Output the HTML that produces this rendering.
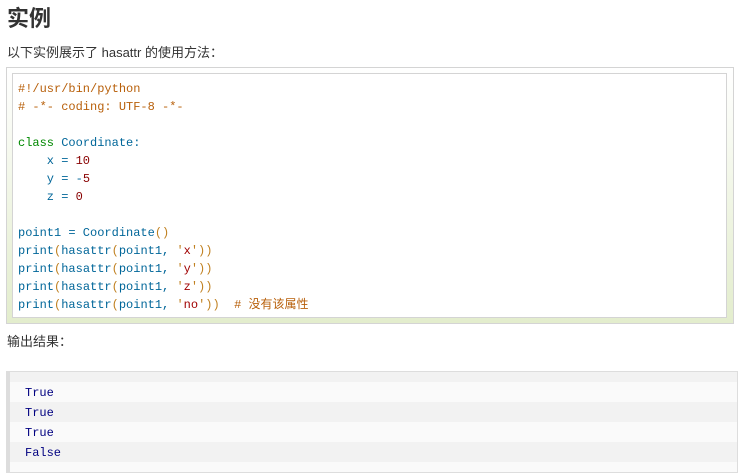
<!DOCTYPE html>
<html><head><meta charset="utf-8"><style>
body{margin:0;background:#fff;width:741px;height:476px;overflow:hidden;font-family:"Liberation Sans","Noto Sans CJK SC",sans-serif;color:#333}
h2{position:absolute;left:7px;top:5px;margin:0;font-size:22px;line-height:28px;font-weight:bold;color:#333}
.p{position:absolute;left:7px;font-size:13px;line-height:18px}
.outer{position:absolute;left:6px;top:67px;width:726px;height:255px;border:1px solid #d4d4d4;background:linear-gradient(#fff,#e3edcd)}
.inner{position:absolute;left:5px;top:5px;width:713px;height:243px;border:1px solid #d4d4d4;background:#fff}
pre{margin:0;position:absolute;left:5px;top:6px;font-family:"Liberation Mono","Noto Sans CJK SC",monospace;font-size:12px;line-height:18px;color:#006699}
.c{color:#b8600b}.k{color:#008800}.n{color:#880000}.o{color:#c08020}.s{color:#a00000}
.out{position:absolute;left:6px;top:371px;width:727px;height:100px;border:1px solid #ddd;border-left:4px solid #ddd;background:#f2f2f2}
.row{position:absolute;left:0;right:0;height:20px;font-family:"Liberation Mono",monospace;font-size:12px;line-height:22px;color:#000080;padding-left:15px}
.a{background:#fafafa}.b{background:#f2f2f2}
</style></head><body>
<h2>实例</h2>
<div class="p" style="top:44px">以下实例展示了 hasattr 的使用方法：</div>
<div class="outer"><div class="inner"><pre><span class="c">#!/usr/bin/python
# -*- coding: UTF-8 -*-</span>

<span class="k">class</span> Coordinate:
    x = <span class="n">10</span>
    y = -<span class="n">5</span>
    z = <span class="n">0</span>

point1 = Coordinate<span class="o">()</span>
print<span class="o">(</span>hasattr<span class="o">(</span>point1, <span class="o">'</span><span class="s">x</span><span class="o">'))</span>
print<span class="o">(</span>hasattr<span class="o">(</span>point1, <span class="o">'</span><span class="s">y</span><span class="o">'))</span>
print<span class="o">(</span>hasattr<span class="o">(</span>point1, <span class="o">'</span><span class="s">z</span><span class="o">'))</span>
print<span class="o">(</span>hasattr<span class="o">(</span>point1, <span class="o">'</span><span class="s">no</span><span class="o">'))</span>  <span class="c"># 没有该属性</span></pre></div></div>
<div class="p" style="top:333px">输出结果：</div>
<div class="out">
<div class="row a" style="top:10px">True</div>
<div class="row b" style="top:30px">True</div>
<div class="row a" style="top:50px">True</div>
<div class="row b" style="top:70px">False</div>
<div class="row a" style="top:90px;height:10px"></div>
</div>
</body></html>
